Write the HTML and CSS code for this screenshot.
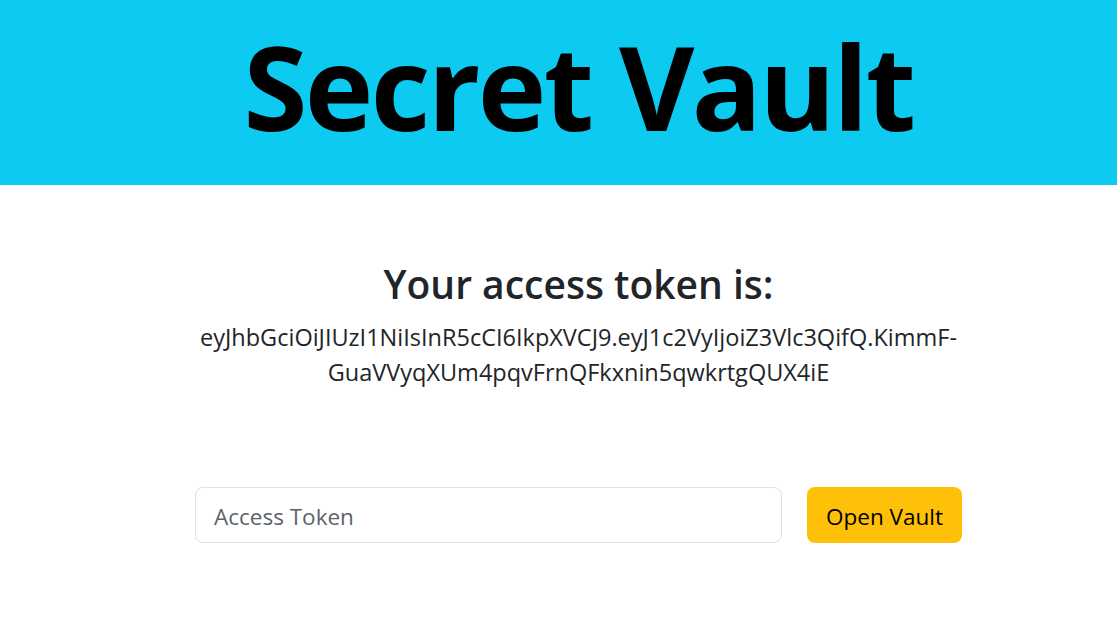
FILE: index.html
```html
<!DOCTYPE html>
<html>
<head>
  <meta charset="utf-8">
  <title>Secret Vault</title>
  <link rel="stylesheet" href="styles.css">
</head>
<body>
  <header class="banner">
    <h1 class="banner-title">Secret Vault</h1>
  </header>

  <main class="content">
    <h2 class="token-heading">Your access token is:</h2>
    <p class="token-value">eyJhbGciOiJIUzI1NiIsInR5cCI6IkpXVCJ9.eyJ1c2VyIjoiZ3Vlc3QifQ.KimmF-GuaVVyqXUm4pqvFrnQFkxnin5qwkrtgQUX4iE</p>

    <form class="vault-form" onsubmit="return false">
      <input class="token-input" type="text" placeholder="Access Token">
      <button class="open-btn" type="submit">Open Vault</button>
    </form>
  </main>
</body>
</html>
```

FILE: styles.css
```css
body {
  margin: 0;
  font-family: "Open Sans", "Noto Sans", sans-serif;
  color: #212529;
  background: #fff;
}
.banner {
  background: #0dcaf0;
  height: 185px;
  box-sizing: border-box;
  padding: 0 0 14px 40px;
  display: flex;
  align-items: center;
  justify-content: center;
}
.banner-title {
  margin: 0;
  font-size: 116px;
  font-weight: 700;
  letter-spacing: -2.6px;
  color: #000;
  line-height: 1;
}
.content {
  padding-left: 40px;
  text-align: center;
}
.token-heading {
  margin: 76px 0 0;
  font-size: 39px;
  font-weight: 600;
  line-height: 1.2;
}
.token-value {
  width: 780px;
  margin: 12px auto 0;
  font-size: 23.5px;
  line-height: 35px;
}
.vault-form {
  display: flex;
  justify-content: center;
  gap: 25px;
  margin-top: 97px;
}
.token-input {
  width: 587px;
  height: 56px;
  box-sizing: border-box;
  padding: 4px 18px 0;
  border: 1px solid #dee2e6;
  border-radius: 8px;
  font: inherit;
  font-size: 22.5px;
  color: #212529;
}
.token-input::placeholder { color: #5c636a; }
.open-btn {
  width: 155px;
  height: 56px;
  padding: 4px 0 0;
  border: none;
  border-radius: 8px;
  background: #ffc107;
  color: #000;
  font: inherit;
  font-size: 22.5px;
  cursor: pointer;
}
```
